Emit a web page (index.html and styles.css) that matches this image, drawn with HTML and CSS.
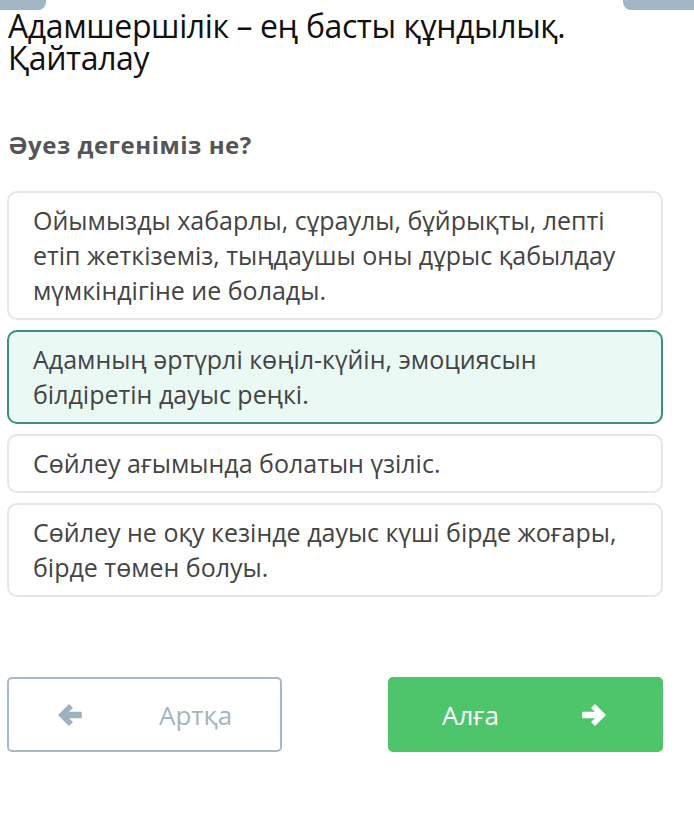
FILE: index.html
```html
<!DOCTYPE html>
<html lang="kk">
<head>
<meta charset="utf-8">
<link rel="stylesheet" href="styles.css">
</head>
<body>
<div class="tabs">
  <div class="tab tab-left"></div>
  <div class="tab tab-right"></div>
</div>
<h1 class="title">Адамшершілік – ең басты құндылық. Қайталау</h1>
<h2 class="question">Әуез дегеніміз не?</h2>
<div class="options">
  <div class="option">Ойымызды хабарлы, сұраулы, бұйрықты, лепті етіп жеткіземіз, тыңдаушы оны дұрыс қабылдау мүмкіндігіне ие болады.</div>
  <div class="option selected">Адамның әртүрлі көңіл-күйін, эмоциясын білдіретін дауыс реңкі.</div>
  <div class="option">Сөйлеу ағымында болатын үзіліс.</div>
  <div class="option">Сөйлеу не оқу кезінде дауыс күші бірде жоғары, бірде төмен болуы.</div>
</div>
<div class="nav">
  <button class="btn btn-back">
    <svg class="arrow" width="26" height="22" viewBox="0 0 26 22"><path d="M12 1 L2 11 L12 21 L15 18 L10 13.5 L24 13.5 L24 8.5 L10 8.5 L15 4 Z" fill="#9fb0bf" stroke="#9fb0bf" stroke-width="1.5" stroke-linejoin="round"/></svg>
    <span>Артқа</span>
  </button>
  <button class="btn btn-next">
    <span>Алға</span>
    <svg class="arrow" width="26" height="22" viewBox="0 0 26 22"><path d="M14 1 L24 11 L14 21 L11 18 L16 13.5 L2 13.5 L2 8.5 L16 8.5 L11 4 Z" fill="#ffffff" stroke="#ffffff" stroke-width="1.5" stroke-linejoin="round"/></svg>
  </button>
</div>
</body>
</html>
```
FILE: styles.css
```css
* { box-sizing: border-box; }
html, body { margin: 0; padding: 0; background: #fff; }
body {
  width: 694px;
  height: 832px;
  font-family: "Open Sans", "Noto Sans", sans-serif;
  position: relative;
  overflow: hidden;
}
.tabs {
  display: flex;
  justify-content: space-between;
  height: 10px;
}
.tab {
  height: 10px;
  background: #a2b6c6;
}
.tab-left { width: 46px; border-bottom-right-radius: 8px; }
.tab-right { width: 71px; border-bottom-left-radius: 8px; }
.title {
  margin: 0 0 0 8px;
  width: 620px;
  font-weight: 400;
  font-size: 32px;
  line-height: 32px;
  color: #111;
  letter-spacing: -0.4px;
}
.question {
  margin: 56px 0 0 8px;
  font-size: 24px;
  font-weight: 700;
  color: #555;
  letter-spacing: 0.5px;
  line-height: 30px;
}
.options {
  margin: 31px 31px 0 7px;
  display: flex;
  flex-direction: column;
  gap: 10px;
}
.option {
  border: 2px solid #e6e6e6;
  border-radius: 10px;
  padding: 10px 24px 10px 24px;
  font-size: 25px;
  line-height: 35px;
  color: #444;
  letter-spacing: 0;
}
.option.selected {
  border-color: #3a8f7f;
  background: #ebf9f4;
}
.nav {
  display: flex;
  justify-content: space-between;
  margin: 80px 31px 0 7px;
}
.btn {
  width: 275px;
  height: 75px;
  border-radius: 5px;
  font-family: inherit;
  font-size: 26px;
  display: flex;
  align-items: center;
  cursor: pointer;
}
.btn-back {
  background: #fff;
  border: 2px solid #a9b8c6;
  color: #a7b3be;
  padding: 0 0 0 48px;
  gap: 76px;
}
.btn-next {
  background: #4ec56a;
  border: none;
  color: #fff;
  padding: 0 56px 0 54px;
  justify-content: space-between;
}
```
